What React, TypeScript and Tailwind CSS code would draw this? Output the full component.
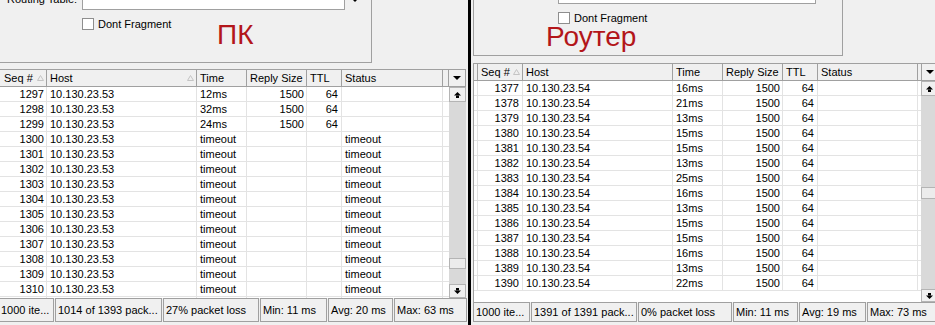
import type { ReactNode } from "react";

type Ping = { seq: number; time: string; size?: string; ttl?: string; status?: string };

// Столбцы: seq, host, time, reply size, ttl, status, хвост
type Col = { w: string; right?: boolean; pad?: string };

const PC_COLS: Col[] = [
  { w: "w-[47px]", right: true, pad: "pr-[2px]" },
  { w: "w-[150px]" },
  { w: "w-[50px]" },
  { w: "w-[60px]", right: true, pad: "pr-[2px]" },
  { w: "w-[35px]", right: true, pad: "pr-[3px]" },
  { w: "w-[101px]" },
  { w: "w-[7px]" },
];

const RT_COLS: Col[] = [
  { w: "w-[4px]" },
  { w: "w-[45px]", right: true, pad: "pr-[3px]" },
  { w: "w-[150px]" },
  { w: "w-[50px]" },
  { w: "w-[60px]", right: true, pad: "pr-[2px]" },
  { w: "w-[35px]", right: true, pad: "pr-[3px]" },
  { w: "w-[100px]" },
  { w: "w-[3px]" },
];

const pcRows: Ping[] = [
  { seq: 1297, time: "12ms", size: "1500", ttl: "64" },
  { seq: 1298, time: "32ms", size: "1500", ttl: "64" },
  { seq: 1299, time: "24ms", size: "1500", ttl: "64" },
  ...Array.from({ length: 12 }, (_, i) => ({ seq: 1300 + i, time: "timeout", status: "timeout" })),
];

const rtTimes = ["16ms", "21ms", "13ms", "15ms", "15ms", "13ms", "25ms", "16ms", "13ms", "15ms", "15ms", "16ms", "13ms", "22ms"];
const rtRows: Ping[] = rtTimes.map((t, i) => ({ seq: 1377 + i, time: t, size: "1500", ttl: "64" }));

function TriDown() {
  return (
    <svg width="8" height="4" viewBox="0 0 8 4">
      <polygon points="0,0 8,0 4,4" fill="#000" />
    </svg>
  );
}

function ArrowUp() {
  return (
    <svg width="7" height="6" viewBox="0 0 7 6">
      <polygon points="3.5,0 7,3.5 0,3.5" fill="#000" />
      <rect x="2" y="3.5" width="3" height="2.5" fill="#000" />
    </svg>
  );
}

function ArrowDown() {
  return (
    <svg width="7" height="6" viewBox="0 0 7 6">
      <rect x="2" y="0" width="3" height="2.5" fill="#000" />
      <polygon points="0,2.5 7,2.5 3.5,6" fill="#000" />
    </svg>
  );
}

function SortMark() {
  return (
    <svg width="7" height="6" viewBox="0 0 7 6">
      <polygon points="3.5,0.5 6.5,5.5 0.5,5.5" fill="none" stroke="#c4c4c4" strokeWidth="1" />
    </svg>
  );
}

function HeadCell({ w, children }: { w: string; children?: ReactNode }) {
  return (
    <div className={`${w} flex h-full shrink-0 items-center overflow-hidden whitespace-nowrap border-r border-[#a0a0a0] pl-[3px]`}>
      {children}
    </div>
  );
}

function Cell({ col, text }: { col: Col; text?: string | number }) {
  return (
    <div
      className={`${col.w} ${col.right ? "text-right" : "pl-[3px]"} ${col.pad ?? ""} h-full shrink-0 overflow-hidden whitespace-nowrap border-r border-[#e3e3e3] leading-[14px]`}
    >
      {text}
    </div>
  );
}

function Checkbox({ className }: { className?: string }) {
  return <div className={`h-[12px] w-[12px] shrink-0 border border-[#8e8e8e] bg-white ${className ?? ""}`} />;
}

function StatusCell({ w, children, first }: { w: string; children: ReactNode; first?: boolean }) {
  return (
    <div
      className={`${w} flex h-full shrink-0 items-center overflow-hidden whitespace-nowrap border-y border-r border-[#a0a0a0] ${first ? "pl-[1px]" : "border-l pl-[2px]"}`}
    >
      {children}
    </div>
  );
}

function Scrollbar({ w, thumbTop, downH }: { w: string; thumbTop?: boolean; downH: string }) {
  return (
    <div className={`${w} flex shrink-0 flex-col bg-[#d9d9d9]`}>
      <div className="flex h-[15px] shrink-0 items-center justify-center border border-[#b4b4b4] bg-[#f0f0f0]">
        <ArrowUp />
      </div>
      {thumbTop ? (
        <div className="mt-[156px] h-[11px] shrink-0 border border-[#b4b4b4] bg-[#ececec]" />
      ) : (
        <div className="mt-auto h-[12px] shrink-0 border border-[#b4b4b4] bg-[#ececec]" />
      )}
      <div className={`${downH} mt-auto flex shrink-0 items-center justify-center border border-[#b4b4b4] bg-[#f0f0f0]`}>
        <ArrowDown />
      </div>
    </div>
  );
}

export default function App() {
  return (
    <div className="flex h-[325px] w-[935px] overflow-hidden bg-[#f0f0f0] font-['Liberation_Sans',Arial,sans-serif] text-[11px] text-black">
      {/* ПК */}
      <div className="relative flex h-full w-[468px] shrink-0 flex-col overflow-hidden">
        <div className="flex h-[63px] w-[372px] shrink-0 flex-col border-r border-b border-[#a0a0a0]">
          <div className="-mt-[11px] flex h-[21px] shrink-0 items-center">
            <span className="w-[82px] shrink-0 whitespace-nowrap pl-[7px]">Routing Table:</span>
            <div className="h-[21px] w-[263px] shrink-0 border border-[#a0a0a0] bg-white" />
            <div className="ml-[6px]">
              <TriDown />
            </div>
          </div>
          <div className="mt-[8px] flex h-[12px] items-center">
            <Checkbox className="ml-[82px]" />
            <span className="ml-[4px] whitespace-nowrap">Dont Fragment</span>
          </div>
        </div>
        <span className="absolute top-[21px] left-[217px] text-[28px] leading-none text-[#b3161a]">ПК</span>

        <div className="mt-[6px] flex min-h-0 w-[466px] flex-1 flex-col">
          <div className="flex h-[18px] shrink-0 border-y border-[#a0a0a0] bg-[#f0f0f0]">
            <HeadCell w="w-[47px]">
              <span className="pl-[1px]">Seq #</span>
              <span className="ml-[4px]"><SortMark /></span>
            </HeadCell>
            <HeadCell w="w-[150px]">
              <span>Host</span>
              <span className="mr-[2px] ml-auto"><SortMark /></span>
            </HeadCell>
            <HeadCell w="w-[50px]">Time</HeadCell>
            <HeadCell w="w-[60px]">Reply Size</HeadCell>
            <HeadCell w="w-[35px]">TTL</HeadCell>
            <HeadCell w="w-[101px]">Status</HeadCell>
            <HeadCell w="w-[6px]" />
            <div className="flex w-[17px] shrink-0 items-center justify-center border-r border-[#a0a0a0]">
              <TriDown />
            </div>
          </div>
          <div className="flex min-h-0 flex-1">
            <div className="flex w-[449px] shrink-0 flex-col overflow-hidden bg-white">
              {pcRows.map((r) => (
                <div key={r.seq} className="flex h-[15px] shrink-0 border-b border-[#e3e3e3]">
                  <Cell col={PC_COLS[0]} text={r.seq} />
                  <Cell col={PC_COLS[1]} text="10.130.23.53" />
                  <Cell col={PC_COLS[2]} text={r.time} />
                  <Cell col={PC_COLS[3]} text={r.size} />
                  <Cell col={PC_COLS[4]} text={r.ttl} />
                  <Cell col={PC_COLS[5]} text={r.status} />
                  <Cell col={PC_COLS[6]} />
                </div>
              ))}
            </div>
            <Scrollbar w="w-[17px]" thumbTop downH="h-[14px]" />
          </div>
        </div>

        <div className="flex h-[27px] shrink-0 flex-col">
          <div className="flex h-[24px] gap-[1px]">
            <StatusCell w="w-[54px]" first>1000 ite...</StatusCell>
            <StatusCell w="w-[107px]">1014 of 1393 pack...</StatusCell>
            <StatusCell w="w-[96px]">27% packet loss</StatusCell>
            <StatusCell w="w-[67px]">Min: 11 ms</StatusCell>
            <StatusCell w="w-[65px]">Avg: 20 ms</StatusCell>
            <StatusCell w="w-[73px]">Max: 63 ms</StatusCell>
          </div>
        </div>
      </div>

      <div className="h-full w-[3px] shrink-0 bg-black" />

      {/* Роутер */}
      <div className="relative flex h-full w-[464px] shrink-0 flex-col overflow-hidden">
        <div className="ml-[2px] flex h-[56px] w-[370px] shrink-0 flex-col border-x border-b border-[#a0a0a0]">
          <div className="-mt-[17px] flex h-[21px] shrink-0 items-center">
            <span className="-ml-[28px] w-[112px] shrink-0 whitespace-nowrap">Routing Table:</span>
            <div className="h-[21px] w-[258px] shrink-0 border border-[#a0a0a0] bg-white" />
          </div>
          <div className="mt-[8px] flex h-[12px] items-center">
            <Checkbox className="ml-[84px]" />
            <span className="ml-[4px] whitespace-nowrap">Dont Fragment</span>
          </div>
        </div>
        <span className="absolute top-[23px] left-[75px] text-[28px] leading-none text-[#b3161a]">Роутер</span>

        <div className="mt-[7px] ml-[2px] flex min-h-0 w-[464px] flex-1 shrink-0 flex-col border-l border-[#a0a0a0]">
          <div className="flex h-[18px] shrink-0 border-y border-[#a0a0a0] bg-[#f0f0f0]">
            <HeadCell w="w-[4px]" />
            <HeadCell w="w-[45px]">
              <span>Seq #</span>
              <span className="ml-[3px]"><SortMark /></span>
            </HeadCell>
            <HeadCell w="w-[150px]">Host</HeadCell>
            <HeadCell w="w-[50px]">Time</HeadCell>
            <HeadCell w="w-[60px]">Reply Size</HeadCell>
            <HeadCell w="w-[35px]">TTL</HeadCell>
            <HeadCell w="w-[100px]">Status</HeadCell>
            <HeadCell w="w-[3px]" />
            <div className="flex w-[16px] shrink-0 items-center justify-center">
              <TriDown />
            </div>
          </div>
          <div className="flex min-h-0 flex-1">
            <div className="flex w-[447px] shrink-0 flex-col overflow-hidden bg-white">
              {rtRows.map((r) => (
                <div key={r.seq} className="flex h-[15px] shrink-0 border-b border-[#e3e3e3]">
                  <Cell col={RT_COLS[0]} />
                  <Cell col={RT_COLS[1]} text={r.seq} />
                  <Cell col={RT_COLS[2]} text="10.130.23.54" />
                  <Cell col={RT_COLS[3]} text={r.time} />
                  <Cell col={RT_COLS[4]} text={r.size} />
                  <Cell col={RT_COLS[5]} text={r.ttl} />
                  <Cell col={RT_COLS[6]} />
                  <Cell col={RT_COLS[7]} />
                </div>
              ))}
            </div>
            <Scrollbar w="w-[16px]" downH="h-[13px]" />
          </div>
        </div>

        <div className="ml-[2px] flex h-[23px] shrink-0 flex-col">
          <div className="flex h-[20px] gap-[1px]">
            <StatusCell w="w-[57px]">1000 ite...</StatusCell>
            <StatusCell w="w-[106px]">1391 of 1391 pack...</StatusCell>
            <StatusCell w="w-[94px]">0% packet loss</StatusCell>
            <StatusCell w="w-[65px]">Min: 11 ms</StatusCell>
            <StatusCell w="w-[67px]">Avg: 19 ms</StatusCell>
            <StatusCell w="w-[70px]">Max: 73 ms</StatusCell>
          </div>
        </div>
      </div>
    </div>
  );
}
